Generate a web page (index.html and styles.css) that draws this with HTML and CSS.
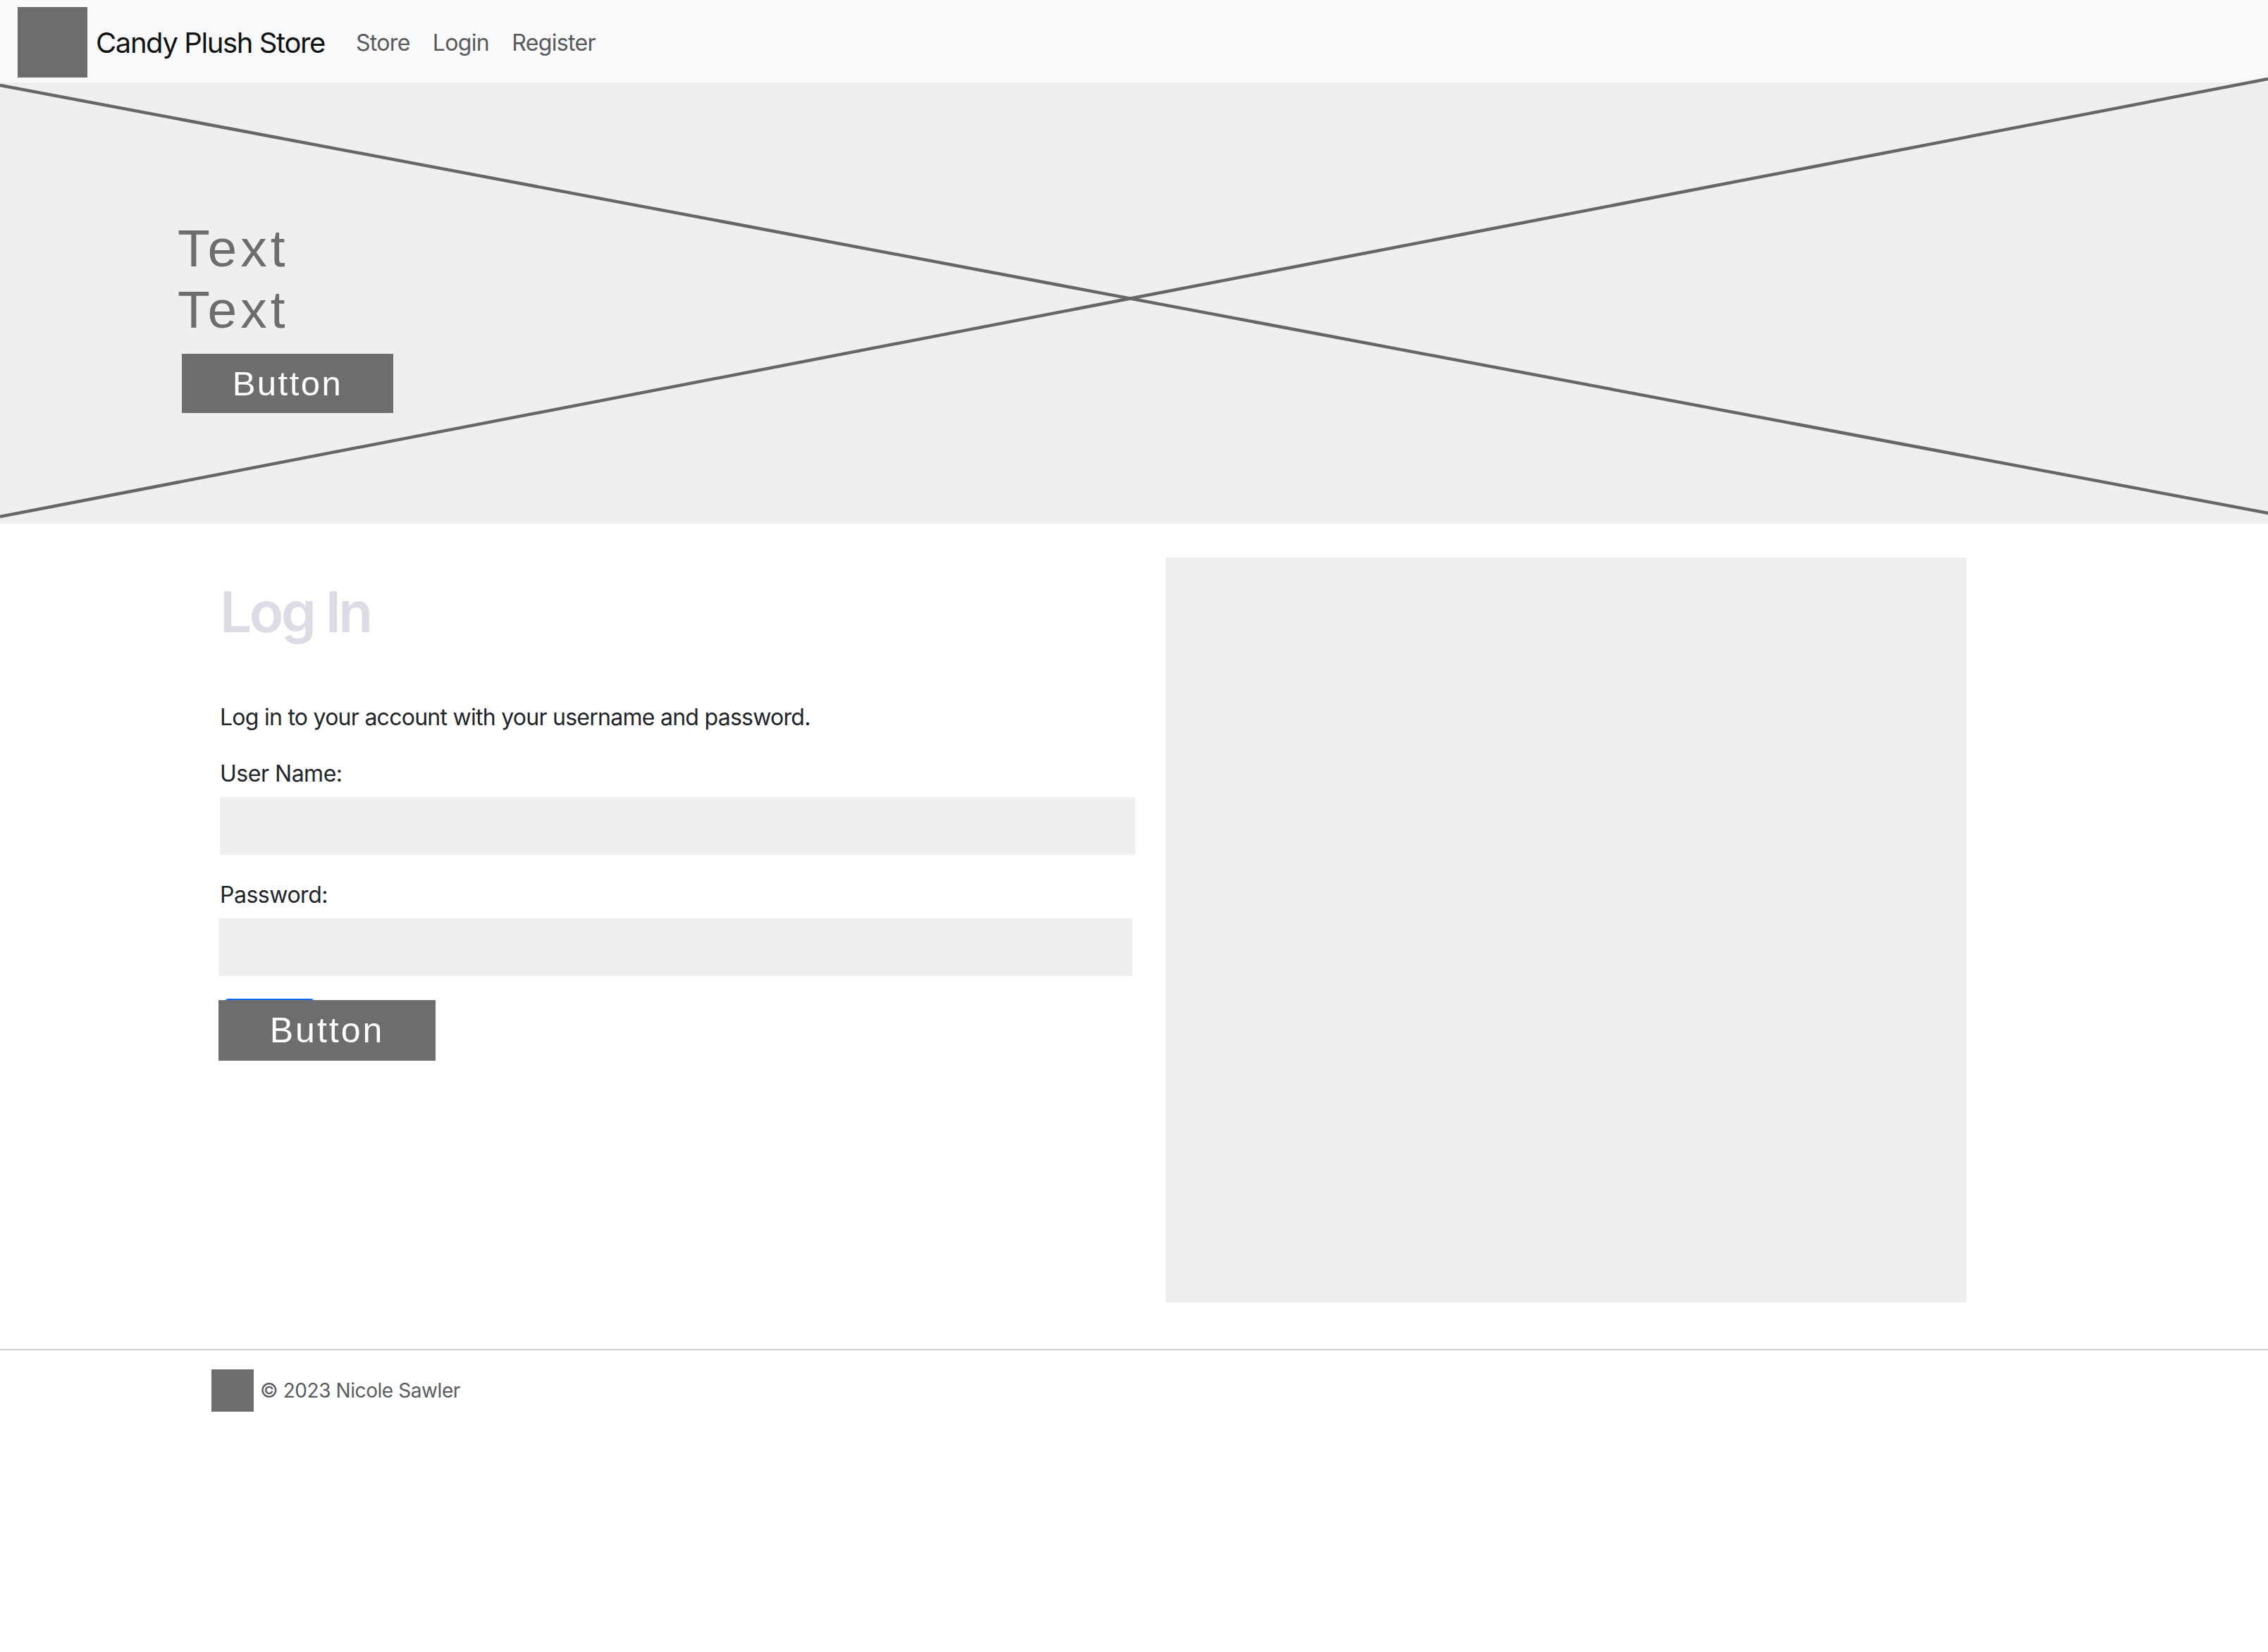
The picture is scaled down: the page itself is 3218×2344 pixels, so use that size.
FILE: index.html
```html
<!DOCTYPE html>
<html lang="en">
<head>
<meta charset="utf-8">
<title>Candy Plush Store - Log In</title>
<link rel="stylesheet" href="styles.css">
</head>
<body>
<nav class="navbar">
  <div class="logo"></div>
  <a class="brand" href="#">Candy Plush Store</a>
  <ul class="nav-links">
    <li><a href="#">Store</a></li>
    <li><a href="#">Login</a></li>
    <li><a href="#">Register</a></li>
  </ul>
</nav>
<header class="hero">
  <svg class="hero-x" viewBox="0 0 3218 626" preserveAspectRatio="none">
    <line x1="0" y1="4" x2="3218" y2="611" />
    <line x1="0" y1="616" x2="3218" y2="-5" />
  </svg>
  <div class="hero-content">
    <p class="hero-text">Text<br>Text</p>
    <button class="btn-placeholder hero-btn" type="button">Button</button>
  </div>
</header>
<main class="main">
  <section class="login">
    <h1 class="login-title">Log In</h1>
    <p class="intro">Log in to your account with your username and password.</p>
    <form class="login-form">
      <label class="field-label" for="user">User Name:</label>
      <input class="field-input" id="user" type="text">
      <label class="field-label field-label-second" for="pass">Password:</label>
      <input class="field-input field-input-second" id="pass" type="password">
      <div class="btn-wrap">
        <button class="btn-placeholder login-btn" type="submit">Button</button>
      </div>
    </form>
  </section>
  <div class="side-box"></div>
</main>
<footer class="footer">
  <div class="footer-logo"></div>
  <span class="footer-text">© 2023 Nicole Sawler</span>
</footer>
</body>
</html>
```
FILE: styles.css
```css
html, body {
  margin: 0;
  padding: 0;
}
body {
  font-family: Inter, "Liberation Sans", Arial, sans-serif;
  color: #212529;
  background: #ffffff;
}

/* Navbar */
.navbar {
  display: flex;
  align-items: center;
  height: 117px;
  box-sizing: border-box;
  padding: 3px 24px 0 25px;
  background: #f8f9fa;
}
.logo {
  flex: none;
  width: 99px;
  height: 100px;
  background: #6d6d6d;
}
.brand {
  margin-left: 12px;
  font-size: 40px;
  letter-spacing: -0.035em;
  color: #111111;
  text-decoration: none;
}
.nav-links {
  display: flex;
  gap: 32px;
  list-style: none;
  margin: 0 0 0 44px;
  padding: 0;
}
.nav-links a {
  font-size: 32px;
  letter-spacing: -0.02em;
  color: #595959;
  text-decoration: none;
}

/* Hero */
.hero {
  position: relative;
  height: 626px;
  background: #efefef;
}
.hero-x {
  position: absolute;
  left: 0;
  top: 0;
  width: 100%;
  height: 100%;
  overflow: visible;
}
.hero-x line {
  stroke: #666666;
  stroke-width: 4.5;
}
.hero-content {
  position: relative;
  padding: 192px 0 0 252px;
}
.hero-text {
  margin: 0;
  font-family: "Liberation Sans", Arial, sans-serif;
  font-size: 75px;
  line-height: 87px;
  letter-spacing: 5px;
  color: #6d6d6d;
}
.btn-placeholder {
  display: block;
  padding: 0;
  border: 0;
  border-radius: 0;
  background: #6d6d6d;
  color: #ffffff;
  font-family: "Liberation Sans", Arial, sans-serif;
  letter-spacing: 2.5px;
}
.hero-btn {
  margin: 19px 0 0 6px;
  width: 300px;
  height: 84px;
  font-size: 49px;
}

/* Main */
.main {
  display: flex;
  gap: 43px;
  padding: 48px 0 0 312px;
}
.login {
  width: 1299px;
}
.login-title {
  margin: 29px 0 0;
  font-size: 80px;
  line-height: 96px;
  font-weight: 600;
  letter-spacing: -0.045em;
  color: #dcdce6;
}
.intro {
  margin: 78px 0 0;
  font-size: 32px;
  line-height: 48px;
  letter-spacing: -0.023em;
}
.login-form {
  margin: 0;
}
.field-label {
  display: block;
  margin-top: 32px;
  font-size: 32px;
  line-height: 48px;
  letter-spacing: -0.015em;
}
.field-label-second {
  margin-top: 33px;
}
.field-input {
  display: block;
  box-sizing: border-box;
  margin-top: 9px;
  width: 1299px;
  height: 82px;
  border: 0;
  border-radius: 2px;
  background: #efefef;
}
.field-input-second {
  width: 1297px;
  margin-left: -2px;
}
.btn-wrap {
  position: relative;
  margin: 34px 0 0 -2px;
}
.btn-wrap::before {
  content: "";
  position: absolute;
  left: 10px;
  top: -2px;
  width: 125px;
  height: 4px;
  border-radius: 6px 6px 0 0;
  background: #0d6efd;
}
.login-btn {
  position: relative;
  width: 308px;
  height: 86px;
  font-size: 50px;
  letter-spacing: 3px;
}
.side-box {
  flex: none;
  width: 1136px;
  height: 1057px;
  background: #ededed;
}

/* Footer */
.footer {
  display: flex;
  align-items: center;
  gap: 9px;
  margin-top: 66px;
  padding: 27px 0 0 300px;
  border-top: 2px solid #d0d0d0;
}
.footer-logo {
  flex: none;
  width: 60px;
  height: 60px;
  background: #6d6d6d;
}
.footer-text {
  font-size: 28px;
  letter-spacing: -0.015em;
  color: #595c5f;
}
```
